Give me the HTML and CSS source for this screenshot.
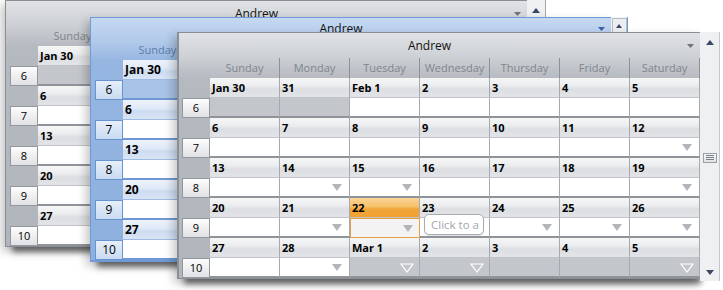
FILE: index.html
```html
<!DOCTYPE html>
<html>
<head>
<meta charset="utf-8">
<link rel="stylesheet" href="styles.css">
</head>
<body>

<div class="win w1">
  <div class="main">
    <div class="title"><span class="name">Andrew</span><span class="drop"><svg width="7" height="4" viewBox="0 0 7 4"><path d="M0 0H7L3.5 4Z"/></svg></span></div>
    <div class="days"><span></span><span>Sunday</span><span>Monday</span><span>Tuesday</span><span>Wednesday</span><span>Thursday</span><span>Friday</span><span>Saturday</span></div>
    <div class="wh"><span></span><span class="d">Jan 30</span><span class="d">31</span><span class="d">Feb 1</span><span class="d">2</span><span class="d">3</span><span class="d">4</span><span class="d">5</span></div>
    <div class="wb"><span class="lb">6</span><span class="c o"></span><span class="c o"></span><span class="c"></span><span class="c"></span><span class="c"></span><span class="c"></span><span class="c"></span></div>
    <div class="wh"><span></span><span class="d">6</span><span class="d">7</span><span class="d">8</span><span class="d">9</span><span class="d">10</span><span class="d">11</span><span class="d">12</span></div>
    <div class="wb"><span class="lb">7</span><span class="c"></span><span class="c"></span><span class="c"></span><span class="c"></span><span class="c"></span><span class="c"></span><span class="c"></span></div>
    <div class="wh"><span></span><span class="d">13</span><span class="d">14</span><span class="d">15</span><span class="d">16</span><span class="d">17</span><span class="d">18</span><span class="d">19</span></div>
    <div class="wb"><span class="lb">8</span><span class="c"></span><span class="c"></span><span class="c"></span><span class="c"></span><span class="c"></span><span class="c"></span><span class="c"></span></div>
    <div class="wh"><span></span><span class="d">20</span><span class="d">21</span><span class="d">22</span><span class="d">23</span><span class="d">24</span><span class="d">25</span><span class="d">26</span></div>
    <div class="wb"><span class="lb">9</span><span class="c"></span><span class="c"></span><span class="c"></span><span class="c"></span><span class="c"></span><span class="c"></span><span class="c"></span></div>
    <div class="wh"><span></span><span class="d">27</span><span class="d">28</span><span class="d">Mar 1</span><span class="d">2</span><span class="d">3</span><span class="d">4</span><span class="d">5</span></div>
    <div class="wb"><span class="lb">10</span><span class="c"></span><span class="c"></span><span class="c o"></span><span class="c o"></span><span class="c o"></span><span class="c o"></span><span class="c o"></span></div>
  </div>
  <div class="scroll">
    <span class="up"><svg width="8" height="5" viewBox="0 0 8 5"><path d="M0 5H8L4 0Z"/></svg></span>
  </div>
</div>

<div class="win w2">
  <div class="main">
    <div class="title"><span class="name">Andrew</span><span class="drop"><svg width="7" height="4" viewBox="0 0 7 4"><path d="M0 0H7L3.5 4Z"/></svg></span></div>
    <div class="days"><span></span><span>Sunday</span><span>Monday</span><span>Tuesday</span><span>Wednesday</span><span>Thursday</span><span>Friday</span><span>Saturday</span></div>
    <div class="wh"><span></span><span class="d">Jan 30</span><span class="d">31</span><span class="d">Feb 1</span><span class="d">2</span><span class="d">3</span><span class="d">4</span><span class="d">5</span></div>
    <div class="wb"><span class="lb">6</span><span class="c o"></span><span class="c o"></span><span class="c"></span><span class="c"></span><span class="c"></span><span class="c"></span><span class="c"></span></div>
    <div class="wh"><span></span><span class="d">6</span><span class="d">7</span><span class="d">8</span><span class="d">9</span><span class="d">10</span><span class="d">11</span><span class="d">12</span></div>
    <div class="wb"><span class="lb">7</span><span class="c"></span><span class="c"></span><span class="c"></span><span class="c"></span><span class="c"></span><span class="c"></span><span class="c"></span></div>
    <div class="wh"><span></span><span class="d">13</span><span class="d">14</span><span class="d">15</span><span class="d">16</span><span class="d">17</span><span class="d">18</span><span class="d">19</span></div>
    <div class="wb"><span class="lb">8</span><span class="c"></span><span class="c"></span><span class="c"></span><span class="c"></span><span class="c"></span><span class="c"></span><span class="c"></span></div>
    <div class="wh"><span></span><span class="d">20</span><span class="d">21</span><span class="d">22</span><span class="d">23</span><span class="d">24</span><span class="d">25</span><span class="d">26</span></div>
    <div class="wb"><span class="lb">9</span><span class="c"></span><span class="c"></span><span class="c"></span><span class="c"></span><span class="c"></span><span class="c"></span><span class="c"></span></div>
    <div class="wh"><span></span><span class="d">27</span><span class="d">28</span><span class="d">Mar 1</span><span class="d">2</span><span class="d">3</span><span class="d">4</span><span class="d">5</span></div>
    <div class="wb"><span class="lb">10</span><span class="c"></span><span class="c"></span><span class="c o"></span><span class="c o"></span><span class="c o"></span><span class="c o"></span><span class="c o"></span></div>
  </div>
  <div class="scroll">
    <span class="up"><svg width="6" height="4" viewBox="0 0 6 4"><path d="M0 4H6L3 0Z"/></svg></span>
  </div>
</div>

<div class="win w3">
  <div class="main">
    <div class="title"><span class="name">Andrew</span><span class="drop"><svg width="7" height="4" viewBox="0 0 7 4"><path d="M0 0H7L3.5 4Z"/></svg></span></div>
    <div class="days"><span></span><span>Sunday</span><span>Monday</span><span>Tuesday</span><span>Wednesday</span><span>Thursday</span><span>Friday</span><span>Saturday</span></div>

    <div class="wh"><span></span><span class="d">Jan 30</span><span class="d">31</span><span class="d">Feb 1</span><span class="d">2</span><span class="d">3</span><span class="d">4</span><span class="d">5</span></div>
    <div class="wb"><span class="lb">6</span><span class="c o"></span><span class="c o"></span><span class="c"></span><span class="c"></span><span class="c"></span><span class="c"></span><span class="c"></span></div>

    <div class="wh"><span></span><span class="d">6</span><span class="d">7</span><span class="d">8</span><span class="d">9</span><span class="d">10</span><span class="d">11</span><span class="d">12</span></div>
    <div class="wb"><span class="lb">7</span><span class="c"></span><span class="c"></span><span class="c"></span><span class="c"></span><span class="c"></span><span class="c"></span><span class="c"><svg class="tri" width="10" height="7" viewBox="0 0 10 7"><path d="M0 0H10L5 7Z"/></svg></span></div>

    <div class="wh"><span></span><span class="d">13</span><span class="d">14</span><span class="d">15</span><span class="d">16</span><span class="d">17</span><span class="d">18</span><span class="d">19</span></div>
    <div class="wb"><span class="lb">8</span><span class="c"></span><span class="c"><svg class="tri" width="10" height="7" viewBox="0 0 10 7"><path d="M0 0H10L5 7Z"/></svg></span><span class="c"><svg class="tri" width="10" height="7" viewBox="0 0 10 7"><path d="M0 0H10L5 7Z"/></svg></span><span class="c"></span><span class="c"></span><span class="c"></span><span class="c"><svg class="tri" width="10" height="7" viewBox="0 0 10 7"><path d="M0 0H10L5 7Z"/></svg></span></div>

    <div class="wh"><span></span><span class="d">20</span><span class="d">21</span><span class="d sel">22</span><span class="d">23</span><span class="d">24</span><span class="d">25</span><span class="d">26</span></div>
    <div class="wb"><span class="lb">9</span><span class="c"></span><span class="c"><svg class="tri" width="10" height="7" viewBox="0 0 10 7"><path d="M0 0H10L5 7Z"/></svg></span><span class="c sel"><svg class="tri" width="10" height="7" viewBox="0 0 10 7"><path d="M0 0H10L5 7Z"/></svg></span><span class="c"><span class="tip">Click to a</span></span><span class="c"><svg class="tri" width="10" height="7" viewBox="0 0 10 7"><path d="M0 0H10L5 7Z"/></svg></span><span class="c"><svg class="tri" width="10" height="7" viewBox="0 0 10 7"><path d="M0 0H10L5 7Z"/></svg></span><span class="c"><svg class="tri" width="10" height="7" viewBox="0 0 10 7"><path d="M0 0H10L5 7Z"/></svg></span></div>

    <div class="wh"><span></span><span class="d">27</span><span class="d">28</span><span class="d">Mar 1</span><span class="d">2</span><span class="d">3</span><span class="d">4</span><span class="d">5</span></div>
    <div class="wb"><span class="lb">10</span><span class="c"></span><span class="c"><svg class="tri" width="10" height="7" viewBox="0 0 10 7"><path d="M0 0H10L5 7Z"/></svg></span><span class="c o"><svg class="htri" width="14" height="10" viewBox="0 0 14 10"><path d="M1 1H13L7 9Z"/></svg></span><span class="c o"><svg class="htri" width="14" height="10" viewBox="0 0 14 10"><path d="M1 1H13L7 9Z"/></svg></span><span class="c o"></span><span class="c o"></span><span class="c o"><svg class="htri" width="14" height="10" viewBox="0 0 14 10"><path d="M1 1H13L7 9Z"/></svg></span></div>
  </div>
  <div class="scroll">
    <span class="up"><svg width="8" height="5" viewBox="0 0 8 5"><path d="M0 5H8L4 0Z"/></svg></span>
    <span class="thumb"><svg width="8" height="6" viewBox="0 0 8 6"><path d="M0 .5H8M0 2.5H8M0 4.5H8"/></svg></span>
    <span class="dn"><svg width="8" height="5" viewBox="0 0 8 5"><path d="M0 0H8L4 5Z"/></svg></span>
  </div>
</div>

</body>
</html>
```

FILE: styles.css
```css
* { box-sizing: border-box; margin: 0; padding: 0; }
html, body { width: 723px; height: 290px; }
body {
  position: relative;
  overflow: hidden;
  background: #fff;
  font-family: "Open Sans", "Noto Sans", sans-serif;
  font-size: 11px;
  color: #000;
}

.win { position: absolute; display: flex; align-items: flex-start; }
.w1 { left: 5px; top: 0; z-index: 1; }
.w2 { left: 90px; top: 17px; z-index: 2; }
.w3 { left: 177px; top: 32px; z-index: 3; }

.main {
  width: 523px;
  height: 247px;
  display: flex;
  flex-direction: column;
  border: 1px solid #8a8f96;
  border-right: 0;
  background: linear-gradient(#e0e2e5 0, #ccd0d4 25px, #b5b9c0 46px, #b1b5bc 100%);
  box-shadow: -4px 4px 9px rgba(0, 0, 0, .22), 4px 8px 6px -3px rgba(0, 0, 0, .55);
  overflow: hidden;
}
.w1 .main { width: 522px; }
.w3 .main { border-left-width: 2px; }
.w3 .days, .w3 .wh, .w3 .wb { padding-left: 3px; }

.title { flex: none; height: 25px; display: flex; align-items: center; }
.name { flex: 1; text-align: center; font-size: 12px; line-height: 16px; color: #111; }
.drop { width: 20px; display: flex; justify-content: center; }
.drop svg { fill: #6f747b; }

.days, .wh, .wb {
  flex: none;
  display: grid;
  grid-template-columns: 28px repeat(7, 1fr);
  height: 20px;
  padding-left: 4px;
}
.days span {
  border-right: 1px solid #8d9299;
  color: #80858c;
  text-align: center;
  line-height: 19px;
  white-space: nowrap;
  overflow: hidden;
}
.days span:first-child { border-right: 0; }

.d {
  background: linear-gradient(#f6f6f7 0%, #ebeced 42%, #dcdee1 58%, #e3e4e7 100%);
  border-right: 1px solid #a6aab0;
  border-bottom: 1px solid #c0c3c8;
  font-weight: 700;
  padding-left: 2px;
  line-height: 19px;
  white-space: nowrap;
}
.d.sel { background: linear-gradient(#fad497 0%, #f7c168 45%, #f1a536 58%, #f0a232 100%); }

.lb {
  border: 1px solid #92979e;
  background: linear-gradient(#fdfdfd, #e1e2e5);
  text-align: center;
  line-height: 18px;
}
.c {
  position: relative;
  background: #fff;
  border-right: 1px solid #a6aab0;
  border-bottom: 2px solid #8f949b;
  display: flex;
  justify-content: flex-end;
  align-items: center;
  padding: 1px 7px 0 0;
}
.c.o { background: #c3c6cb; padding-right: 5px; }
.c.sel { border: 1px solid #e39f42; background: #f3f3f3; padding-right: 6px; }
.tri { fill: #b2b5ba; }
.htri { fill: none; stroke: #fff; stroke-width: 1.2; }

.tip {
  position: absolute;
  left: 4px;
  top: -4px;
  width: 60px;
  height: 21px;
  border: 1px solid #a8abb0;
  border-radius: 5px;
  background: #fff;
  color: #a3a6aa;
  font-size: 11.5px;
  line-height: 19px;
  padding-left: 6px;
  white-space: nowrap;
  box-shadow: 0 1px 1px rgba(0, 0, 0, .12);
}

.scroll {
  width: 20px;
  height: 249px;
  background: #eff0f2;
  border-right: 1px solid #c3c7cc;
  display: flex;
  flex-direction: column;
  align-items: center;
}
.w1 .scroll { width: 19px; height: 247px; border-right-color: #a4a9af; }
.up { flex: none; height: 20px; display: flex; align-items: center; }
.up svg, .dn svg { fill: #3c4866; }
.thumb {
  flex: none;
  margin-top: 101px;
  width: 14px;
  height: 10px;
  border: 1px solid #9aa0a7;
  background: linear-gradient(#f7f8f9, #dfe1e4);
  display: flex;
  justify-content: center;
  align-items: center;
}
.thumb svg { stroke: #7a8087; stroke-width: 1; fill: none; }
.dn { flex: none; margin-top: auto; height: 18px; display: flex; align-items: center; }

.w2 .main {
  width: 521px;
  height: 245px;
  border-color: #6e9ad5;
  border-bottom-width: 2px;
  background: linear-gradient(#c5d8f1 0, #b3cbeb 22px, #96b6e1 43px, #8db0de 100%);
}
.w2 .title { height: 22px; }
.w2 .drop svg { fill: #3c63a6; }
.w2 .days span { color: #5d7eaa; border-right-color: #6f98d0; }
.w2 .days span:first-child { border-right: 0; }
.w2 .d {
  background: linear-gradient(#eef3fb 0%, #dfe9f7 45%, #cddcf1 58%, #d9e5f5 100%);
  border-right-color: #7ba2d6;
  border-bottom-color: #9dbbe3;
  font-size: 12px;
}
.w2 .lb {
  border-color: #6893cf;
  background: linear-gradient(#e6eefa, #c9dbf2);
  font-size: 12px;
}
.w2 .c { border-right-color: #7ba2d6; border-bottom-color: #6f98d2; }
.w2 .c.o { background: #a9c3e7; }
.w2 .scroll {
  width: 17px;
  height: 16px;
  border-right: 1px solid #6e9ad5;
  background: #f3f4f6;
}
.w2 .up {
  width: 15px;
  height: 15px;
  margin-top: 1px;
  justify-content: center;
  border: 1px solid #b8bdc4;
  background: #eceef1;
}
```
